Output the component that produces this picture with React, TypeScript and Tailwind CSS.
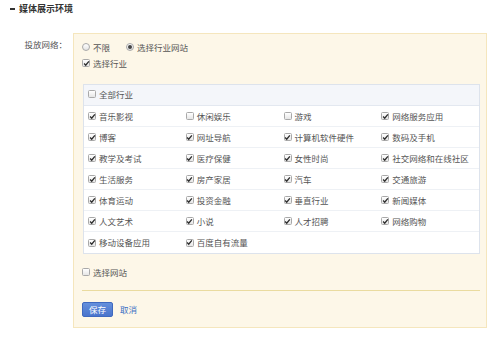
import React from "react";

const Check = ({ checked }: { checked: boolean }) => (
  <span className="relative inline-flex h-[8px] w-[8px] shrink-0 items-center justify-center rounded-[1.5px] border border-[#a9a9a9] bg-gradient-to-b from-[#ffffff] to-[#e6e6e6]">
    {checked && (
      <svg viewBox="0 0 8 8" className="absolute h-[7px] w-[7px]">
        <path d="M1.3 4.1 L3.1 5.9 L6.7 1.6" fill="none" stroke="#2b2b2b" strokeWidth="1.5" />
      </svg>
    )}
  </span>
);

const Radio = ({ checked }: { checked: boolean }) => (
  <span className="inline-flex h-[8px] w-[8px] shrink-0 items-center justify-center rounded-full border border-[#a9a9a9] bg-gradient-to-b from-[#ffffff] to-[#e4e4e4]">
    {checked && <span className="h-[4px] w-[4px] rounded-full bg-[#444]" />}
  </span>
);

const items: [string, boolean][] = [
  ["音乐影视", true],
  ["休闲娱乐", false],
  ["游戏", false],
  ["网络服务应用", true],
  ["博客", true],
  ["网址导航", true],
  ["计算机软件硬件", true],
  ["数码及手机", true],
  ["教学及考试", true],
  ["医疗保健", true],
  ["女性时尚", true],
  ["社交网络和在线社区", true],
  ["生活服务", true],
  ["房产家居", true],
  ["汽车", true],
  ["交通旅游", true],
  ["体育运动", true],
  ["投资金融", true],
  ["垂直行业", true],
  ["新闻媒体", true],
  ["人文艺术", true],
  ["小说", true],
  ["人才招聘", true],
  ["网络购物", true],
  ["移动设备应用", true],
  ["百度自有流量", true],
];

const rows: [string, boolean][][] = [];
for (let i = 0; i < items.length; i += 4) rows.push(items.slice(i, i + 4));

export default function App() {
  return (
    <div
      className="h-[345px] w-[500px] overflow-hidden bg-white text-[8.5px] text-[#555]"
      style={{ fontFamily: '"Microsoft YaHei","Noto Sans CJK SC","Noto Sans",sans-serif' }}
    >
      <div className="flex h-[17px] items-center pl-[10px] pt-[1px]">
        <span className="h-[1.5px] w-[5px] bg-[#333]" />
        <span className="ml-[4px] text-[9px] font-semibold text-[#333]">媒体展示环境</span>
      </div>
      <div className="mt-[16px] flex">
        <div className="w-[67px] pt-[5px] text-right text-[#555]">投放网络：</div>
        <div className="ml-[6px] w-[414px] border border-[#f5e6bd] bg-[#fdf7e8] pb-[10px] pl-[8px] pr-[6px]">
          <div className="mt-[6px] flex h-[14px] items-center">
            <Radio checked={false} />
            <span className="ml-[3px]">不限</span>
            <span className="ml-[16px] flex items-center">
              <Radio checked={true} />
              <span className="ml-[3px]">选择行业网站</span>
            </span>
          </div>
          <div className="mt-[2px] flex h-[14px] items-center">
            <Check checked={true} />
            <span className="ml-[3px]">选择行业</span>
          </div>
          <div className="ml-[1px] mt-[14px] w-[397px] border border-[#dde3ec] bg-white">
            <div className="flex h-[21px] items-center border-b border-[#e3e8f0] bg-[#f4f6fa] pb-[2px] pl-[4px]">
              <Check checked={false} />
              <span className="ml-[3px]">全部行业</span>
            </div>
            {rows.map((r, ri) => (
              <div
                key={ri}
                className={`grid h-[21px] grid-cols-4 items-center pl-[4px] ${ri < rows.length - 1 ? "border-b border-[#eef1f5]" : ""}`}
              >
                {r.map(([t, c]) => (
                  <div key={t} className="flex items-center">
                    <Check checked={c} />
                    <span className="ml-[3px]">{t}</span>
                  </div>
                ))}
              </div>
            ))}
          </div>
          <div className="mt-[11px] flex h-[14px] items-center">
            <Check checked={false} />
            <span className="ml-[3px]">选择网站</span>
          </div>
          <div className="mt-[11px] h-[1px] w-[398px] bg-[#eadb9f]" />
          <div className="mt-[11px] flex items-center">
            <button className="h-[15px] w-[31px] rounded-[2px] border border-[#3f69bf] bg-gradient-to-b from-[#6590dc] to-[#4a74cc] text-[8.5px] text-white">
              保存
            </button>
            <span className="ml-[7px] text-[#3b6fc4]">取消</span>
          </div>
        </div>
      </div>
    </div>
  );
}
